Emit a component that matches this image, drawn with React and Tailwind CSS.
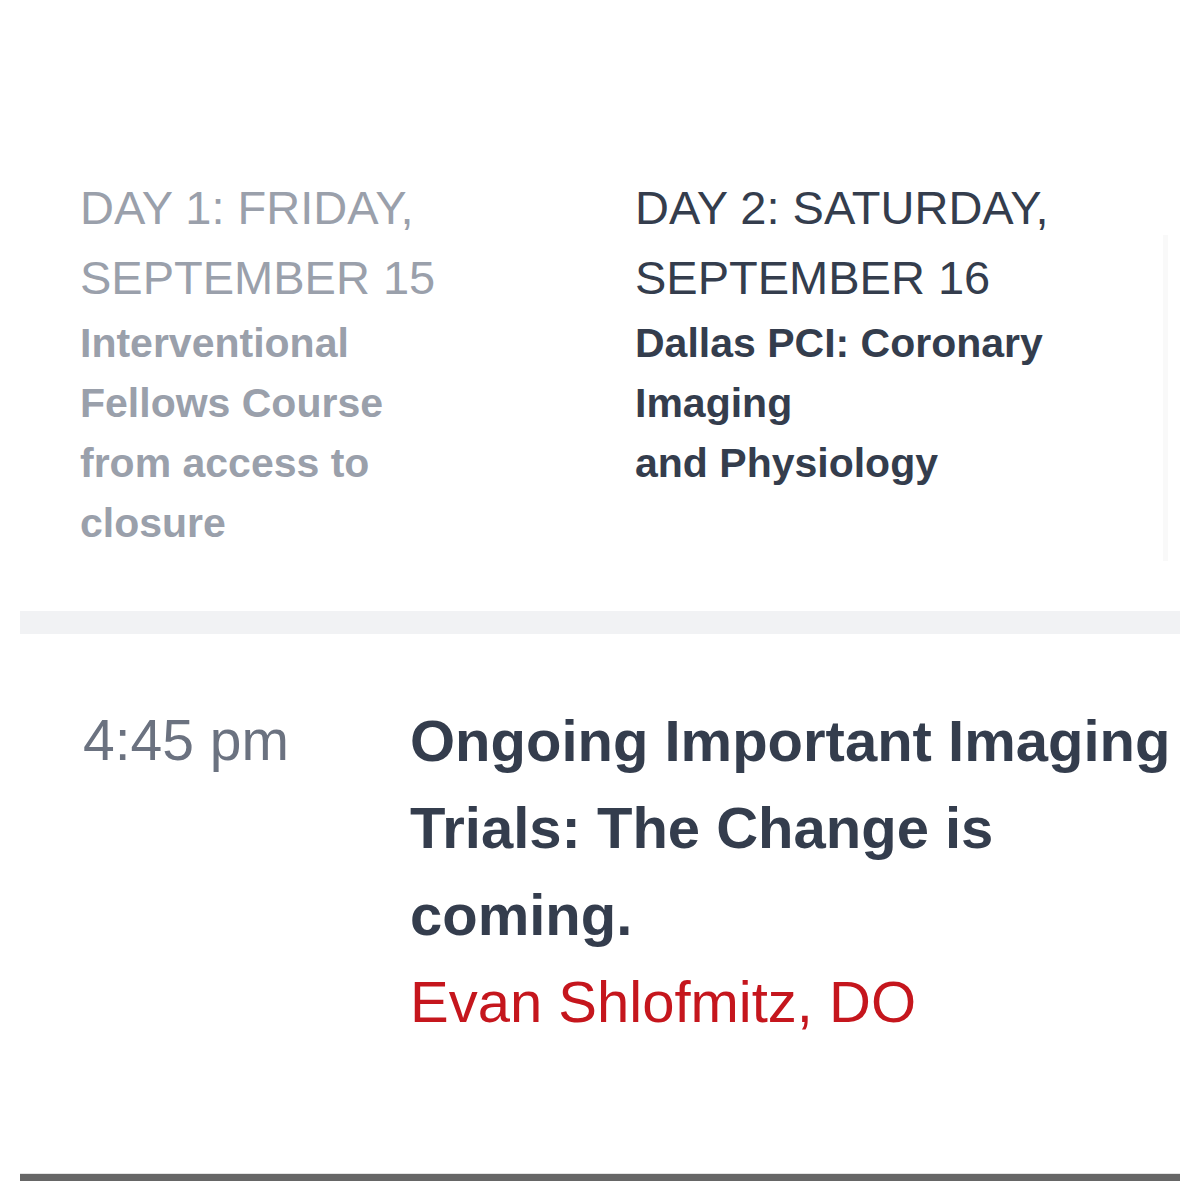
export default function App() {
  return (
    <div className="w-[1200px] h-[1200px] bg-white px-[20px] pt-[173px] font-['Liberation_Sans',Arial,sans-serif]">
      {/* day tabs */}
      <div className="flex pl-[60px]">
        <div className="w-[555px] pb-[8px] text-[#9aa0ab]">
          <div className="text-[47px] leading-[70px]">
            DAY 1: FRIDAY,<br />SEPTEMBER 15
          </div>
          <div className="text-[41px] leading-[60px] font-bold">
            Interventional<br />Fellows Course<br />from access to<br />closure
          </div>
        </div>
        <div className="flex-1 text-[#343d4d]">
          <div className="text-[47px] leading-[70px]">
            DAY 2: SATURDAY,<br />SEPTEMBER 16
          </div>
          <div className="text-[41px] leading-[60px] font-bold">
            Dallas PCI: Coronary<br />Imaging<br />and Physiology
          </div>
        </div>
        <div className="w-[5px] mt-[62px] mr-[12px] bg-[#f9f9f9]" />
      </div>

      <div className="mt-[50px] h-[23px] bg-[#f1f2f4]" />

      {/* session */}
      <div className="flex pt-[63px]">
        <div className="w-[390px] pl-[63px] text-[57px] leading-[87px] text-[#6b7280]">4:45 pm</div>
        <div className="flex-1">
          <div className="text-[58px] leading-[87px] font-bold text-[#343d4d]">
            Ongoing Important Imaging<br />Trials: The Change is<br />coming.
          </div>
          <div className="text-[58px] leading-[87px] text-[#c5161d]">Evan Shlofmitz, DO</div>
        </div>
      </div>

      <div className="mt-[128px] h-[1px] bg-[#e4e4e4]" />
      <div className="h-[7px] bg-[#666666]" />
    </div>
  );
}
